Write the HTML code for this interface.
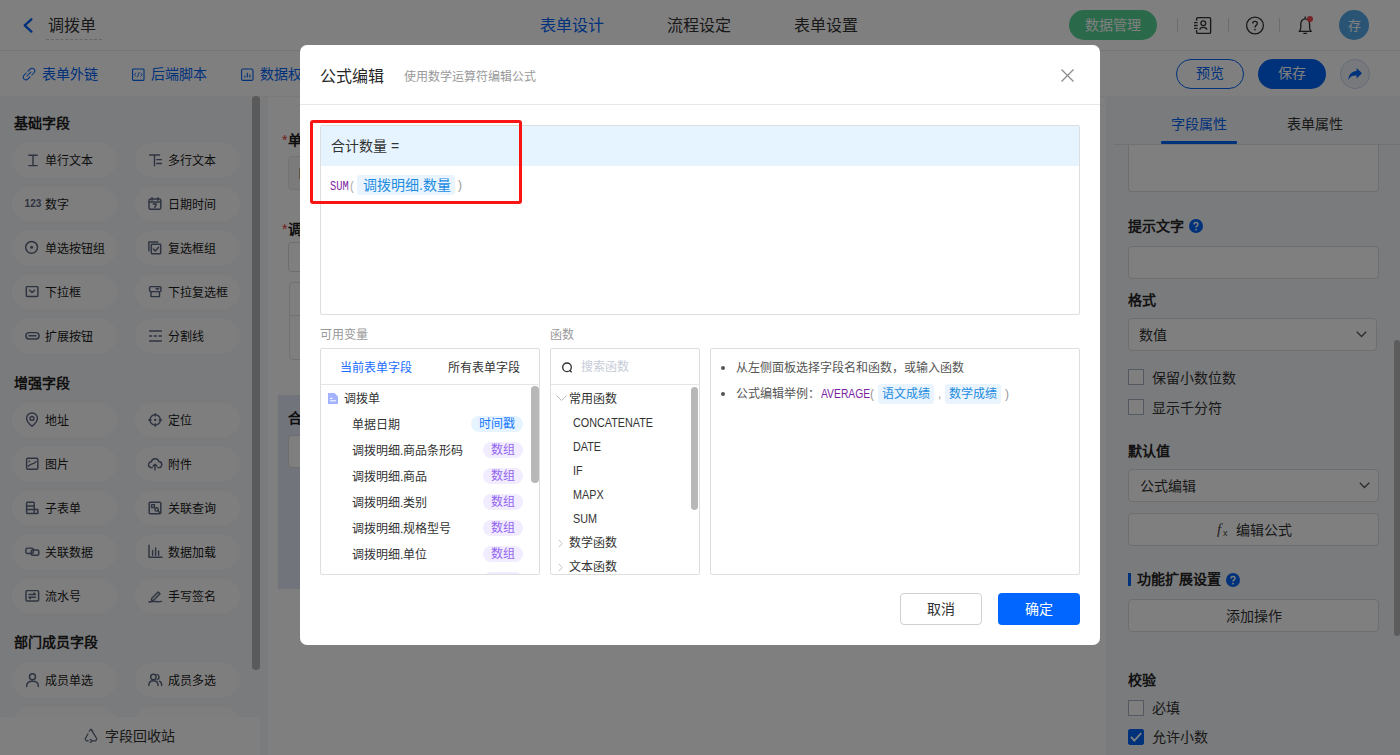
<!DOCTYPE html>
<html lang="zh-CN">
<head>
<meta charset="utf-8">
<style>
*{box-sizing:border-box;margin:0;padding:0}
html,body{width:1400px;height:755px;overflow:hidden;background:#fff;font-family:"Liberation Sans",sans-serif;color:#333}
.abs{position:absolute}
.t{position:absolute;white-space:nowrap;line-height:1}
/* header */
#hdr{position:absolute;left:0;top:0;width:1400px;height:51px;background:#fff;border-bottom:1px solid #ebebeb}
#bar2{position:absolute;left:0;top:51px;width:1400px;height:45px;background:#fff;box-shadow:0 1px 1px rgba(0,0,0,0.04)}
#left{position:absolute;left:0;top:97px;width:268px;height:658px;background:#f5f6f8;box-shadow:0 -1px 0 #f2f3f5}
.sec{position:absolute;left:14px;font-size:14px;font-weight:bold;color:#1f1f1f;line-height:14px}
.pill{position:absolute;width:105px;height:34px;border-radius:17px;background:#fdfdfd}
.pill .ic{position:absolute;overflow:visible}
.pill .tx{position:absolute;left:33px;top:12px;font-size:12px;line-height:12px;color:#1a1a1a;white-space:nowrap}
#canvas{position:absolute;left:268px;top:97px;width:838px;height:658px;background:#fff}
#right{position:absolute;left:1106px;top:97px;width:294px;height:658px;background:#f5f6f8}
.lbl{position:absolute;left:22px;font-size:14px;line-height:14px;font-weight:bold;color:#262626;white-space:nowrap}
.inp{position:absolute;left:22px;width:251px;background:#fff;border:1px solid #dcdcdc;border-radius:4px}
.cb{position:absolute;left:22px;width:16px;height:16px;border:1px solid #a8b0c0;background:#fff;border-radius:0}
.cbl{position:absolute;left:46px;font-size:14px;line-height:14px;color:#333;white-space:nowrap}
#mask{position:absolute;left:0;top:0;width:1400px;height:755px;background:rgba(0,0,0,0.5)}
#modal{position:absolute;left:300px;top:45px;width:800px;height:600px;background:#fff;border-radius:7px}
.box{position:absolute;border:1px solid #dedede;border-radius:2px;background:#fff}
.mt{position:absolute;white-space:nowrap;font-size:12px;line-height:12px;color:#333}
.tag{position:absolute;height:16px;border-radius:8px;font-size:12px;line-height:17px;text-align:center}
</style>
</head>
<body>
<!-- ================= UNDERLYING PAGE ================= -->
<div id="hdr">
  <svg class="abs" style="left:22px;top:17px" width="12" height="17" viewBox="0 0 12 17"><path d="M9.4 2.3 L2.7 8.4 L9.4 14.6" fill="none" stroke="#0063f7" stroke-width="2.3" stroke-linecap="round" stroke-linejoin="round"/></svg>
  <div class="t" style="left:48px;top:18px;font-size:16px;color:#333">调拨单</div>
  <div class="abs" style="left:46px;top:39px;width:56px;border-top:1px dashed #cfcfcf"></div>
  <div class="t" style="left:540px;top:18px;font-size:16px;color:#0063f7">表单设计</div>
  <div class="t" style="left:667px;top:18px;font-size:16px;color:#333">流程设定</div>
  <div class="t" style="left:794px;top:18px;font-size:16px;color:#333">表单设置</div>
  <div class="abs" style="left:1069px;top:10px;width:88px;height:30px;border-radius:15px;background:#55d496"></div>
  <div class="t" style="left:1085px;top:18px;font-size:14px;color:#fff">数据管理</div>
  <div class="abs" style="left:1177px;top:18px;width:1px;height:14px;background:#d9d9d9"></div>
  <div class="abs" style="left:1228px;top:18px;width:1px;height:14px;background:#d9d9d9"></div>
  <div class="abs" style="left:1279px;top:18px;width:1px;height:14px;background:#d9d9d9"></div>
  <svg class="abs" style="left:1188px;top:12px" width="30" height="26" viewBox="0 0 30 26"><path d="M8.6 8.8V6.6Q8.6 5.6 9.8 5.6H21.4Q22.6 5.6 22.6 6.8V20.2Q22.6 21.4 21.4 21.4H9.8Q8.6 21.4 8.6 20.2V18" fill="none" stroke="#333" stroke-width="1.4"/><path d="M6 10.7H9.6M6 13.5H9.6M6 16.3H9.6" stroke="#333" stroke-width="1.3"/><circle cx="15.3" cy="11.3" r="2.4" fill="none" stroke="#333" stroke-width="1.3"/><path d="M11.8 17.8C12 14.6 18.6 14.6 18.8 17.8" fill="none" stroke="#333" stroke-width="1.3"/></svg>
  <svg class="abs" style="left:1245px;top:16px" width="20" height="20" viewBox="0 0 20 20"><circle cx="10" cy="9.5" r="8.4" fill="none" stroke="#333" stroke-width="1.3"/><path d="M7.7 7.4C7.7 4.7 12.3 4.7 12.3 7.4C12.3 9.3 10 9.4 10 11.6" fill="none" stroke="#333" stroke-width="1.35"/><circle cx="10" cy="13.6" r="0.85" fill="#333"/></svg>
  <svg class="abs" style="left:1296px;top:16px" width="20" height="20" viewBox="0 0 20 20"><path d="M3.2 15.3C4.4 14.3 4.8 13.2 4.8 11.5V8C4.8 5 6.8 2.8 9.2 2.8C11.6 2.8 13.6 5 13.6 8V11.5C13.6 13.2 14 14.3 15.2 15.3Z" fill="none" stroke="#333" stroke-width="1.35" stroke-linejoin="round"/><path d="M9.2 1V2.4M7.9 17.4H10.5" stroke="#333" stroke-width="1.3" stroke-linecap="round"/></svg>
  <div class="abs" style="left:1306.7px;top:15.7px;width:6.6px;height:6.6px;border-radius:50%;background:#f0464a"></div>
  <div class="abs" style="left:1339px;top:10px;width:30px;height:30px;border-radius:50%;background:#52a8e8"></div>
  <div class="t" style="left:1348px;top:19px;font-size:13px;color:#fff">存</div>
</div>
<div id="bar2">
  <svg class="abs" style="left:22px;top:16px" width="14" height="14" viewBox="0 0 14 14"><path d="M6 4.2 L8 2.2 C9.2 1 11 1 12 2 C13 3 13 4.8 11.8 6 L9.8 8" fill="none" stroke="#0063f7" stroke-width="1.05" stroke-linecap="round"/><path d="M8 9.8 L6 11.8 C4.8 13 3 13 2 12 C1 11 1 9.2 2.2 8 L4.2 6" fill="none" stroke="#0063f7" stroke-width="1.05" stroke-linecap="round"/><path d="M5 9 L9 5" stroke="#0063f7" stroke-width="1.05" stroke-linecap="round"/></svg>
  <div class="t" style="left:42px;top:16px;font-size:14px;color:#0063f7">表单外链</div>
  <svg class="abs" style="left:131px;top:16px" width="14" height="14" viewBox="0 0 14 14"><rect x="1.6" y="2" width="11.4" height="11.4" rx="0.8" fill="none" stroke="#0063f7" stroke-width="1.1"/><path d="M5 5.8L3.4 7.7L5 9.6M9.6 5.8L11.2 7.7L9.6 9.6M8.2 5L6.4 10.4" fill="none" stroke="#0063f7" stroke-width="0.9"/></svg>
  <div class="t" style="left:151px;top:16px;font-size:14px;color:#0063f7">后端脚本</div>
  <svg class="abs" style="left:240px;top:16px" width="14" height="14" viewBox="0 0 14 14"><rect x="1.6" y="2" width="11.4" height="11.4" rx="1.5" fill="none" stroke="#0063f7" stroke-width="1.1"/><path d="M4.8 10.6V8.4M7.3 10.6V5.8M9.8 10.6V7.4" stroke="#0063f7" stroke-width="1.1"/></svg>
  <div class="t" style="left:260px;top:16px;font-size:14px;color:#0063f7">数据权限</div>
  <div class="abs" style="left:1176px;top:8px;width:68px;height:30px;border-radius:15px;border:1px solid #0063f7;background:#fff"></div>
  <div class="t" style="left:1196px;top:15px;font-size:14px;color:#0063f7">预览</div>
  <div class="abs" style="left:1258px;top:8px;width:68px;height:30px;border-radius:15px;background:#0063f7"></div>
  <div class="t" style="left:1278px;top:15px;font-size:14px;color:#fff">保存</div>
  <div class="abs" style="left:1340px;top:8px;width:30px;height:30px;border-radius:50%;background:#f0f3fa;border:1px solid #c9d5ee"></div>
  <svg class="abs" style="left:1347px;top:16px" width="16" height="15" viewBox="0 0 16 15"><path d="M15 6.3 L9.6 1 V3.9 C5 4.2 1.6 7 1.2 13.2 C2.8 9.6 5.6 8.3 9.6 8.5 V11.6 Z" fill="#0063f7"/></svg>
</div>

<div id="left">
  <div class="sec" style="top:19px">基础字段</div>
  <div class="pill" style="left:12px;top:46px"><svg class="ic" style="left:13px;top:10px;width:15px;height:14px" viewBox="0 0 15 14"><path d="M3.8 2.3H12.2M8 2.3V12.6M3.8 12.6H12.2" fill="none" stroke="#5b6780" stroke-width="1.45" stroke-linecap="round" stroke-linejoin="round"/></svg><div class="tx">单行文本</div></div>
  <div class="pill" style="left:135px;top:46px"><svg class="ic" style="left:13px;top:10px;width:15px;height:14px" viewBox="0 0 15 14"><path d="M1.6 2H11.5M6.5 2V12.8M8.8 6.6H13.4M8.8 10.4H13.4" fill="none" stroke="#5b6780" stroke-width="1.45" stroke-linecap="round" stroke-linejoin="round"/></svg><div class="tx">多行文本</div></div>
  <div class="pill" style="left:12px;top:90px"><svg class="ic" style="left:13px;top:10px;width:15px;height:14px" viewBox="0 0 15 14"><text x="-0.5" y="10.2" font-size="10" font-weight="bold" font-family="Liberation Sans" fill="#5b6780" letter-spacing="0.1">123</text></svg><div class="tx">数字</div></div>
  <div class="pill" style="left:135px;top:90px"><svg class="ic" style="left:13px;top:10px;width:15px;height:14px" viewBox="0 0 15 14"><rect x="1" y="2" width="11.8" height="10.3" rx="1.5" fill="none" stroke="#5b6780" stroke-width="1.45" stroke-linecap="round" stroke-linejoin="round"/><path d="M1 5H12.8M4 0.8V3.2M10 0.8V3.2M5.2 7H8.3L6.8 10.5" fill="none" stroke="#5b6780" stroke-width="1.45" stroke-linecap="round" stroke-linejoin="round"/></svg><div class="tx">日期时间</div></div>
  <div class="pill" style="left:12px;top:134px"><svg class="ic" style="left:13px;top:10px;width:15px;height:14px" viewBox="0 0 15 14"><circle cx="6.6" cy="6.3" r="5.9" fill="none" stroke="#5b6780" stroke-width="1.45" stroke-linecap="round" stroke-linejoin="round"/><circle cx="6.6" cy="6.3" r="1.5" fill="#5b6780"/></svg><div class="tx">单选按钮组</div></div>
  <div class="pill" style="left:135px;top:134px"><svg class="ic" style="left:13px;top:10px;width:15px;height:14px" viewBox="0 0 15 14"><path d="M0.9 9.8V0.9H9.8" fill="none" stroke="#5b6780" stroke-width="1.45" stroke-linecap="round" stroke-linejoin="round"/><rect x="3.3" y="3.3" width="9.4" height="9.4" rx="0.6" fill="none" stroke="#5b6780" stroke-width="1.45" stroke-linecap="round" stroke-linejoin="round"/><path d="M5.3 8L7.3 10L10.6 6.2" fill="none" stroke="#5b6780" stroke-width="1.45" stroke-linecap="round" stroke-linejoin="round"/></svg><div class="tx">复选框组</div></div>
  <div class="pill" style="left:12px;top:178px"><svg class="ic" style="left:13px;top:10px;width:15px;height:14px" viewBox="0 0 15 14"><rect x="1.3" y="1.6" width="11.6" height="9.8" rx="0.8" fill="none" stroke="#5b6780" stroke-width="1.45" stroke-linecap="round" stroke-linejoin="round"/><path d="M4.6 5.2L7.1 7.5L9.6 5.2" fill="none" stroke="#5b6780" stroke-width="1.45" stroke-linecap="round" stroke-linejoin="round"/></svg><div class="tx">下拉框</div></div>
  <div class="pill" style="left:135px;top:178px"><svg class="ic" style="left:13px;top:10px;width:15px;height:14px" viewBox="0 0 15 14"><rect x="1.6" y="1.6" width="11.3" height="5" rx="1" fill="none" stroke="#5b6780" stroke-width="1.45" stroke-linecap="round" stroke-linejoin="round"/><path d="M3 6.6V11.6H11.5V6.6M8.1 3.3L9.4 4.6L10.7 3.3" fill="none" stroke="#5b6780" stroke-width="1.45" stroke-linecap="round" stroke-linejoin="round"/></svg><div class="tx">下拉复选框</div></div>
  <div class="pill" style="left:12px;top:222px"><svg class="ic" style="left:13px;top:10px;width:15px;height:14px" viewBox="0 0 15 14"><rect x="0.9" y="3.6" width="13.2" height="6.4" rx="3.2" fill="none" stroke="#5b6780" stroke-width="1.45" stroke-linecap="round" stroke-linejoin="round"/><path d="M4 6.8H10.9" fill="none" stroke="#5b6780" stroke-width="1.45" stroke-linecap="round" stroke-linejoin="round" stroke-width="1.6"/></svg><div class="tx">扩展按钮</div></div>
  <div class="pill" style="left:135px;top:222px"><svg class="ic" style="left:13px;top:10px;width:15px;height:14px" viewBox="0 0 15 14"><path d="M1.6 2H13.4M1.6 7H3.6M6.2 7H8.4M11 7H13.4M1.6 12H13.4" fill="none" stroke="#5b6780" stroke-width="1.45" stroke-linecap="round" stroke-linejoin="round"/></svg><div class="tx">分割线</div></div>
  <div class="sec" style="top:279px">增强字段</div>
  <div class="pill" style="left:12px;top:306px"><svg class="ic" style="left:13px;top:10px;width:15px;height:14px" viewBox="0 0 15 14"><path d="M7 13.2C7 13.2 12.4 8.6 12.4 5.4A5.4 5.4 0 0 0 1.6 5.4C1.6 8.6 7 13.2 7 13.2Z" fill="none" stroke="#5b6780" stroke-width="1.45" stroke-linecap="round" stroke-linejoin="round"/><circle cx="7" cy="5.4" r="1.9" fill="none" stroke="#5b6780" stroke-width="1.45" stroke-linecap="round" stroke-linejoin="round"/></svg><div class="tx">地址</div></div>
  <div class="pill" style="left:135px;top:306px"><svg class="ic" style="left:13px;top:10px;width:15px;height:14px" viewBox="0 0 15 14"><circle cx="7.2" cy="6.9" r="5.2" fill="none" stroke="#5b6780" stroke-width="1.45" stroke-linecap="round" stroke-linejoin="round"/><path d="M7.2 0.6V3M7.2 10.8V13.2M0.8 6.9H3.1M11.3 6.9H13.6" fill="none" stroke="#5b6780" stroke-width="1.45" stroke-linecap="round" stroke-linejoin="round"/><circle cx="7.2" cy="6.9" r="1.2" fill="#5b6780"/></svg><div class="tx">定位</div></div>
  <div class="pill" style="left:12px;top:350px"><svg class="ic" style="left:13px;top:10px;width:15px;height:14px" viewBox="0 0 15 14"><rect x="1.6" y="1.2" width="11.2" height="11" rx="1.2" fill="none" stroke="#5b6780" stroke-width="1.45" stroke-linecap="round" stroke-linejoin="round"/><path d="M3.4 9.2C5 6.2 8 8.2 11 4.6" fill="none" stroke="#5b6780" stroke-width="1.45" stroke-linecap="round" stroke-linejoin="round"/><circle cx="4.3" cy="4.3" r="0.9" fill="#5b6780"/></svg><div class="tx">图片</div></div>
  <div class="pill" style="left:135px;top:350px"><svg class="ic" style="left:13px;top:10px;width:15px;height:14px" viewBox="0 0 15 14"><path d="M4.3 10.6H3.6A2.9 2.9 0 0 1 3.3 4.8A3.9 3.9 0 0 1 10.8 4.5A2.9 2.9 0 0 1 10.6 10.6H9.8M7 12.8V7.3M5.1 9.1L7 7.2L8.9 9.1" fill="none" stroke="#5b6780" stroke-width="1.45" stroke-linecap="round" stroke-linejoin="round"/></svg><div class="tx">附件</div></div>
  <div class="pill" style="left:12px;top:394px"><svg class="ic" style="left:13px;top:10px;width:15px;height:14px" viewBox="0 0 15 14"><rect x="1.6" y="1.2" width="7.6" height="11.2" rx="0.8" fill="none" stroke="#5b6780" stroke-width="1.45" stroke-linecap="round" stroke-linejoin="round"/><path d="M1.6 5H9.2M1.6 8.4H12.8V12.4H9.2" fill="none" stroke="#5b6780" stroke-width="1.45" stroke-linecap="round" stroke-linejoin="round"/></svg><div class="tx">子表单</div></div>
  <div class="pill" style="left:135px;top:394px"><svg class="ic" style="left:13px;top:10px;width:15px;height:14px" viewBox="0 0 15 14"><rect x="1.2" y="1.2" width="11.6" height="11.6" rx="1" fill="none" stroke="#5b6780" stroke-width="1.45" stroke-linecap="round" stroke-linejoin="round"/><rect x="3.6" y="3.6" width="2.8" height="2.8" fill="none" stroke="#5b6780" stroke-width="1.45" stroke-linecap="round" stroke-linejoin="round"/><circle cx="8.6" cy="8.4" r="1.7" fill="none" stroke="#5b6780" stroke-width="1.45" stroke-linecap="round" stroke-linejoin="round"/><path d="M9.8 9.6L11.6 11.4" fill="none" stroke="#5b6780" stroke-width="1.45" stroke-linecap="round" stroke-linejoin="round"/></svg><div class="tx">关联查询</div></div>
  <div class="pill" style="left:12px;top:438px"><svg class="ic" style="left:13px;top:10px;width:15px;height:14px" viewBox="0 0 15 14"><rect x="0.9" y="3.1" width="7.4" height="5.4" rx="1.6" fill="none" stroke="#5b6780" stroke-width="1.45" stroke-linecap="round" stroke-linejoin="round"/><rect x="6.2" y="4.9" width="7.6" height="5.4" rx="1.6" fill="none" stroke="#5b6780" stroke-width="1.45" stroke-linecap="round" stroke-linejoin="round"/></svg><div class="tx">关联数据</div></div>
  <div class="pill" style="left:135px;top:438px"><svg class="ic" style="left:13px;top:10px;width:15px;height:14px" viewBox="0 0 15 14"><path d="M1 0.2V12.3H14M4.6 5.5V10.3M7.6 3V10.3M10.6 6V10.3" fill="none" stroke="#5b6780" stroke-width="1.45" stroke-linecap="round" stroke-linejoin="round"/></svg><div class="tx">数据加载</div></div>
  <div class="pill" style="left:12px;top:482px"><svg class="ic" style="left:13px;top:10px;width:15px;height:14px" viewBox="0 0 15 14"><rect x="1" y="1.6" width="12.6" height="10.4" rx="1" fill="none" stroke="#5b6780" stroke-width="1.45" stroke-linecap="round" stroke-linejoin="round"/><path d="M4 5.4H10.4L9 4.1M10.4 8.3H4L5.4 9.6" fill="none" stroke="#5b6780" stroke-width="1.45" stroke-linecap="round" stroke-linejoin="round"/></svg><div class="tx">流水号</div></div>
  <div class="pill" style="left:135px;top:482px"><svg class="ic" style="left:13px;top:10px;width:15px;height:14px" viewBox="0 0 15 14"><path d="M3.6 9.6L10.2 3L12 4.8L5.4 11.4H3.6Z" fill="none" stroke="#5b6780" stroke-width="1.45" stroke-linecap="round" stroke-linejoin="round"/><path d="M1 13C4 11.6 9 13.4 13.4 12.4" fill="none" stroke="#5b6780" stroke-width="1.45" stroke-linecap="round" stroke-linejoin="round"/></svg><div class="tx">手写签名</div></div>
  <div class="sec" style="top:538px">部门成员字段</div>
  <div class="pill" style="left:12px;top:566px"><svg class="ic" style="left:13px;top:10px;width:15px;height:14px" viewBox="0 0 15 14"><circle cx="7.5" cy="3.8" r="3" fill="none" stroke="#5b6780" stroke-width="1.45" stroke-linecap="round" stroke-linejoin="round"/><path d="M1.6 13.4C1.6 9.6 4.2 8.2 7.5 8.2C10.8 8.2 13.4 9.6 13.4 13.4" fill="none" stroke="#5b6780" stroke-width="1.45" stroke-linecap="round" stroke-linejoin="round"/></svg><div class="tx">成员单选</div></div>
  <div class="pill" style="left:135px;top:566px"><svg class="ic" style="left:13px;top:10px;width:15px;height:14px" viewBox="0 0 15 14"><circle cx="5.4" cy="4" r="2.7" fill="none" stroke="#5b6780" stroke-width="1.45" stroke-linecap="round" stroke-linejoin="round"/><path d="M0.8 12.4C0.8 9.2 2.9 7.8 5.4 7.8C7.9 7.8 10 9.2 10 12.4M8.8 1.4A2.7 2.7 0 0 1 9.4 6.6M11.4 8.2C12.9 8.9 13.7 10.4 13.7 12.4" fill="none" stroke="#5b6780" stroke-width="1.45" stroke-linecap="round" stroke-linejoin="round"/></svg><div class="tx">成员多选</div></div>
  <div class="pill" style="left:12px;top:610px"></div>
  <div class="pill" style="left:135px;top:610px"></div>
  <div class="abs" style="left:252px;top:-1px;width:8px;height:574px;border-radius:4px;background:#b4b4b4"></div>
  <div class="abs" style="left:0;top:620px;width:260px;height:38px;background:#fff"></div>
  <div class="t" style="left:105px;top:632px;font-size:14px;color:#333">字段回收站</div>
  <svg class="abs" style="left:83px;top:631px" width="16" height="16" viewBox="0 0 16 16"><path d="M6.2 3.2L8 1.2L9.8 3.2M10.8 5.6L13.8 10.8L12.8 12.8H9.6M5.4 12.8H3.2L2.2 10.8L5 5.8M8 1.2L10.6 5.6M7.2 11.4L9.6 12.8L7.2 14.4" fill="none" stroke="#56647a" stroke-width="1.2" stroke-linejoin="round" stroke-linecap="round"/></svg>
</div>

<div id="canvas">
  <div class="t" style="left:14px;top:36px;font-size:14px;color:#e53935">*</div>
  <div class="t" style="left:20px;top:36px;font-size:14px;font-weight:bold;color:#1a1a1a">单据日期</div>
  <div class="abs" style="left:20px;top:59px;width:300px;height:34px;border:1px solid #e6e6e6;border-radius:4px;background:#f7f7f7"></div>
  <div class="abs" style="left:31px;top:71px;width:1px;height:11px;background:#c9a27a"></div>
  <div class="t" style="left:14px;top:125px;font-size:14px;color:#e53935">*</div>
  <div class="t" style="left:20px;top:125px;font-size:14px;font-weight:bold;color:#1a1a1a">调出仓库</div>
  <div class="abs" style="left:20px;top:145px;width:300px;height:30px;border:1px solid #dcdcdc;border-radius:4px;background:#fff"></div>
  <div class="abs" style="left:21px;top:185px;width:300px;height:78px;border:1px solid #e3e3e3;border-radius:4px;background:#fff"></div>
  <div class="abs" style="left:21px;top:218px;width:300px;height:1px;background:#e3e3e3"></div>
  <div class="abs" style="left:10px;top:298px;width:300px;height:194px;background:#e3e9f5"></div>
  <div class="t" style="left:20px;top:314px;font-size:14px;font-weight:bold;color:#1a1a1a">合计数量</div>
  <div class="abs" style="left:20px;top:338px;width:300px;height:33px;border:1px solid #dcdcdc;border-radius:4px;background:#fff"></div>
</div>

<div id="right">
  <div class="t" style="left:65px;top:20px;font-size:14px;color:#0063f7">字段属性</div>
  <div class="t" style="left:181px;top:20px;font-size:14px;color:#333">表单属性</div>
  <div class="abs" style="left:8px;top:47px;width:286px;height:1px;background:#e3e3e3"></div>
  <div class="abs" style="left:55px;top:44px;width:76px;height:3px;background:#0063f7;border-radius:1px"></div>
  <div class="inp" style="top:48px;height:47px;border-top:none;border-radius:0 0 4px 4px"></div>
  <div class="lbl" style="top:122px">提示文字</div>
  <svg class="abs" style="left:83px;top:122px" width="14" height="14" viewBox="0 0 14 14"><circle cx="7" cy="7" r="7" fill="#0063f7"/><path d="M5 5.4C5 2.9 9 2.9 9 5.3C9 6.8 7 6.9 7 8.5" fill="none" stroke="#fff" stroke-width="1.5"/><circle cx="7" cy="10.6" r="0.95" fill="#fff"/></svg>
  <div class="inp" style="top:149px;height:33px"></div>
  <div class="lbl" style="top:196px">格式</div>
  <div class="inp" style="top:221px;height:33px;width:249px"></div>
  <div class="t" style="left:33px;top:231px;font-size:14px;color:#333">数值</div>
  <svg class="abs" style="left:250px;top:234px" width="11" height="7" viewBox="0 0 11 7"><path d="M0.8 0.8L5.5 5.5L10.2 0.8" fill="none" stroke="#555" stroke-width="1.3"/></svg>
  <div class="cb" style="top:272px"></div><div class="cbl" style="top:274px">保留小数位数</div>
  <div class="cb" style="top:302px"></div><div class="cbl" style="top:304px">显示千分符</div>
  <div class="lbl" style="top:347px">默认值</div>
  <div class="inp" style="top:372px;height:33px"></div>
  <div class="t" style="left:34px;top:382px;font-size:14px;color:#333">公式编辑</div>
  <svg class="abs" style="left:253px;top:385px" width="11" height="7" viewBox="0 0 11 7"><path d="M0.8 0.8L5.5 5.5L10.2 0.8" fill="none" stroke="#555" stroke-width="1.3"/></svg>
  <div class="inp" style="top:416px;height:33px"></div>
  <div class="t" style="left:111px;top:425px;font-size:15px;font-family:'Liberation Serif',serif;font-style:italic;color:#444">f</div><div class="t" style="left:117px;top:432px;font-size:9px;color:#444">x</div>
  <div class="t" style="left:130px;top:426px;font-size:14px;color:#333">编辑公式</div>
  <div class="abs" style="left:22px;top:476px;width:3px;height:13px;background:#0063f7"></div>
  <div class="lbl" style="left:31px;top:475px">功能扩展设置</div>
  <svg class="abs" style="left:120px;top:476px" width="14" height="14" viewBox="0 0 14 14"><circle cx="7" cy="7" r="7" fill="#0063f7"/><path d="M5 5.4C5 2.9 9 2.9 9 5.3C9 6.8 7 6.9 7 8.5" fill="none" stroke="#fff" stroke-width="1.5"/><circle cx="7" cy="10.6" r="0.95" fill="#fff"/></svg>
  <div class="inp" style="top:502px;height:33px"></div>
  <div class="t" style="left:120px;top:512px;font-size:14px;color:#333">添加操作</div>
  <div class="lbl" style="top:576px">校验</div>
  <div class="cb" style="top:603px"></div><div class="cbl" style="top:604px">必填</div>
  <div class="cb" style="top:632px;background:#0063f7;border-color:#0063f7;border-radius:2px"><svg class="abs" style="left:1px;top:2px;overflow:visible" width="12" height="11" viewBox="0 0 12 11"><path d="M1 4.8L4.3 8.6L11.2 1.2" fill="none" stroke="#fff" stroke-width="1.8"/></svg></div><div class="cbl" style="top:633px">允许小数</div>
  <div class="abs" style="left:288px;top:243px;width:6px;height:296px;border-radius:3px;background:#b8b8b8"></div>
</div>

<div id="mask"></div>

<!-- ================= MODAL ================= -->
<div id="modal">
  <div class="t" style="left:20px;top:24px;font-size:16px;color:#262626">公式编辑</div>
  <div class="t" style="left:104px;top:26px;font-size:12px;color:#999">使用数学运算符编辑公式</div>
  <svg class="abs" style="left:760px;top:23px" width="15" height="15" viewBox="0 0 15 15"><path d="M1.5 1.5 L13.5 13.5 M13.5 1.5 L1.5 13.5" stroke="#8c8c8c" stroke-width="1.3"/></svg>
  <div class="abs" style="left:0;top:59px;width:800px;height:1px;background:#e8e8e8"></div>
  <!-- editor -->
  <div class="box" style="left:20px;top:80px;width:760px;height:190px;overflow:hidden">
    <div class="abs" style="left:0;top:0;width:758px;height:40px;background:#e6f4ff"></div>
    <div class="t" style="left:10px;top:13px;font-size:14px;color:#333">合计数量 =</div>
    <div class="t" style="left:9px;top:55px;font-size:12px;font-family:'Liberation Mono',monospace;color:#7b1fa2;transform:scaleX(0.87);transform-origin:0 0">SUM</div><div class="t" style="left:28px;top:55px;font-size:12px;font-family:'Liberation Mono',monospace;color:#aaa;transform:scaleX(0.87);transform-origin:0 0">(</div>
    <div class="abs" style="left:36px;top:49px;width:98px;height:20px;background:#e9f4fe;border-radius:3px"></div>
    <div class="t" style="left:42px;top:52px;font-size:14px;color:#1d8ce0">调拨明细.数量</div>
    <div class="t" style="left:137px;top:53px;font-size:12px;color:#999">)</div>
  </div>
  <!-- variables -->
  <div class="t" style="left:20px;top:284px;font-size:12px;color:#999">可用变量</div>
  <div class="box" style="left:20px;top:303px;width:220px;height:227px;overflow:hidden">
    <div class="t" style="left:19px;top:13px;font-size:12px;color:#1a6dff">当前表单字段</div>
    <div class="t" style="left:127px;top:13px;font-size:12px;color:#333">所有表单字段</div>
    <div class="abs" style="left:0;top:35px;width:218px;height:1px;background:#e5e5e5"></div>
    <svg class="abs" style="left:7px;top:44px" width="10" height="11" viewBox="0 0 10 11"><path d="M0 0 H6.5 L10 3.5 V11 H0 Z" fill="#a3b3ff"/><path d="M2 5.3h2.5M2 7.8h6" stroke="#fff" stroke-width="1"/></svg>
    <div class="t" style="left:23px;top:44px;font-size:12px;color:#333">调拨单</div>
    <div class="t" style="left:31px;top:70px;font-size:12px;color:#333">单据日期</div>
    <div class="tag" style="left:150px;top:67px;width:52px;background:#e6f4ff;color:#1677ff">时间戳</div>
    <div class="t" style="left:31px;top:96px;font-size:12px;color:#333">调拨明细.商品条形码</div>
    <div class="tag" style="left:162px;top:93px;width:40px;background:#f1ecff;color:#9466f0">数组</div>
    <div class="t" style="left:31px;top:122px;font-size:12px;color:#333">调拨明细.商品</div>
    <div class="tag" style="left:162px;top:119px;width:40px;background:#f1ecff;color:#9466f0">数组</div>
    <div class="t" style="left:31px;top:148px;font-size:12px;color:#333">调拨明细.类别</div>
    <div class="tag" style="left:162px;top:145px;width:40px;background:#f1ecff;color:#9466f0">数组</div>
    <div class="t" style="left:31px;top:174px;font-size:12px;color:#333">调拨明细.规格型号</div>
    <div class="tag" style="left:162px;top:171px;width:40px;background:#f1ecff;color:#9466f0">数组</div>
    <div class="t" style="left:31px;top:200px;font-size:12px;color:#333">调拨明细.单位</div>
    <div class="tag" style="left:162px;top:197px;width:40px;background:#f1ecff;color:#9466f0">数组</div>
    <div class="tag" style="left:162px;top:223px;width:40px;background:#f1ecff;color:#9466f0"></div>
    <div class="abs" style="left:210px;top:37px;width:8px;height:97px;border-radius:4px;background:#b8b8b8"></div>
  </div>
  <!-- functions -->
  <div class="t" style="left:250px;top:284px;font-size:12px;color:#999">函数</div>
  <div class="box" style="left:250px;top:303px;width:150px;height:227px;overflow:hidden">
    <svg class="abs" style="left:10px;top:13px" width="12" height="12" viewBox="0 0 12 12"><circle cx="6" cy="5.3" r="4.3" fill="none" stroke="#333" stroke-width="1.35"/><path d="M9 8.5 L10.4 9.9" stroke="#333" stroke-width="1.35" stroke-linecap="round"/></svg>
    <div class="t" style="left:30px;top:12px;font-size:12px;color:#c6ccd8">搜索函数</div>
    <div class="abs" style="left:0;top:35px;width:148px;height:1px;background:#e5e5e5"></div>
    <svg class="abs" style="left:5px;top:46px" width="11" height="7" viewBox="0 0 11 7"><path d="M0.5 0.5 L5.5 5.5 L10.5 0.5" fill="none" stroke="#bbb" stroke-width="1"/></svg>
    <div class="t" style="left:18px;top:44px;font-size:12px;color:#333">常用函数</div>
    <div class="t" style="left:22px;top:68px;font-size:12px;color:#333;transform:scaleX(0.9);transform-origin:0 0">CONCATENATE</div>
    <div class="t" style="left:22px;top:92px;font-size:12px;color:#333;transform:scaleX(0.9);transform-origin:0 0">DATE</div>
    <div class="t" style="left:22px;top:116px;font-size:12px;color:#333;transform:scaleX(0.9);transform-origin:0 0">IF</div>
    <div class="t" style="left:22px;top:140px;font-size:12px;color:#333;transform:scaleX(0.9);transform-origin:0 0">MAPX</div>
    <div class="t" style="left:22px;top:164px;font-size:12px;color:#333;transform:scaleX(0.9);transform-origin:0 0">SUM</div>
    <svg class="abs" style="left:7px;top:190px" width="5" height="9" viewBox="0 0 5 9"><path d="M0.8 0.8 L4.2 4.5 L0.8 8.2" fill="none" stroke="#c4c4cc" stroke-width="1"/></svg><svg class="abs" style="left:7px;top:214px" width="5" height="9" viewBox="0 0 5 9"><path d="M0.8 0.8 L4.2 4.5 L0.8 8.2" fill="none" stroke="#c4c4cc" stroke-width="1"/></svg>
    <div class="t" style="left:18px;top:188px;font-size:12px;color:#333">数学函数</div>
    <div class="t" style="left:18px;top:212px;font-size:12px;color:#333">文本函数</div>
    <div class="abs" style="left:140px;top:38px;width:7px;height:123px;border-radius:4px;background:#b8b8b8"></div>
  </div>
  <!-- help -->
  <div class="box" style="left:410px;top:303px;width:370px;height:227px">
    <div class="abs" style="left:10px;top:17px;width:4px;height:4px;border-radius:50%;background:#555"></div>
    <div class="t" style="left:25px;top:13px;font-size:12px;color:#555">从左侧面板选择字段名和函数，或输入函数</div>
    <div class="abs" style="left:10px;top:43px;width:4px;height:4px;border-radius:50%;background:#555"></div>
    <div class="t" style="left:25px;top:39px;font-size:12px;color:#555">公式编辑举例：</div>
    <div class="t" style="left:110px;top:39px;font-size:12px;color:#7b1fa2;transform:scaleX(0.86);transform-origin:0 0">AVERAGE</div><div class="t" style="left:159px;top:39px;font-size:12px;color:#999">(</div>
    <div class="abs" style="left:167px;top:35px;width:56px;height:20px;background:#e9f4fe;border-radius:3px"></div>
    <div class="t" style="left:171px;top:39px;font-size:12px;color:#1d8ce0">语文成绩</div>
    <div class="t" style="left:227px;top:39px;font-size:12px;color:#999">,</div>
    <div class="abs" style="left:234px;top:35px;width:56px;height:20px;background:#e9f4fe;border-radius:3px"></div>
    <div class="t" style="left:238px;top:39px;font-size:12px;color:#1d8ce0">数学成绩</div>
    <div class="t" style="left:294px;top:39px;font-size:12px;color:#999">)</div>
  </div>
  <!-- buttons -->
  <div class="abs" style="left:600px;top:548px;width:82px;height:32px;border:1px solid #d0d0d0;border-radius:4px;background:#fff"></div>
  <div class="t" style="left:627px;top:557px;font-size:14px;color:#333">取消</div>
  <div class="abs" style="left:698px;top:548px;width:82px;height:32px;border-radius:4px;background:#0066ff"></div>
  <div class="t" style="left:725px;top:557px;font-size:14px;color:#fff">确定</div>
</div>
<div class="abs" style="left:310px;top:120px;width:212px;height:84px;border:3px solid #fa1414;border-radius:3px"></div>
</body>
</html>
